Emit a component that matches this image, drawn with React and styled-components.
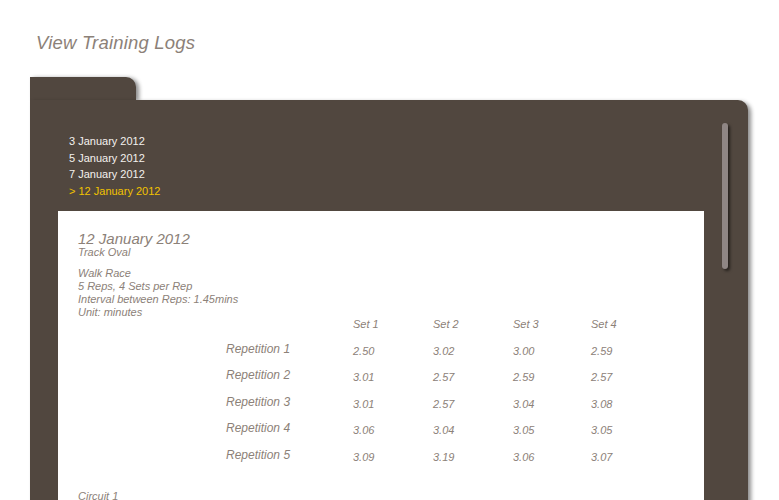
import React from "react";
import styled, { createGlobalStyle } from "styled-components";

const GlobalStyle = createGlobalStyle`
  html, body {
    margin: 0;
    padding: 0;
    background: #ffffff;
    overflow: hidden;
  }
  body {
    font-family: "Liberation Sans", Arial, sans-serif;
  }
  *, *::before, *::after {
    box-sizing: border-box;
  }
`;

const dark = "#51473f";
const ink = "#8c8178";

const Page = styled.div`
  width: 779px;
  height: 500px;
  overflow: hidden;
`;

const Title = styled.h1`
  margin: 0;
  padding: 32px 0 0 36px;
  height: 77px;
  font-size: 18.5px;
  line-height: 22px;
  font-weight: normal;
  font-style: italic;
  color: ${ink};
  letter-spacing: 0.2px;
`;

const Folder = styled.div`
  margin-left: 30px;
  width: 718px;
  display: flex;
  flex-direction: column;
`;

const Tab = styled.div`
  width: 106px;
  height: 23px;
  background: ${dark};
  border-radius: 0 10px 0 0;
  box-shadow: 3px 1px 4px rgba(0, 0, 0, 0.45);
`;

const Panel = styled.div`
  position: relative;
  height: 420px;
  background: ${dark};
  border-radius: 0 10px 0 0;
  box-shadow: 3px 2px 4px rgba(0, 0, 0, 0.45);
  padding: 33px 44px 0 28px;
`;

const Dates = styled.ul`
  list-style: none;
  margin: 0 0 12px 11px;
  padding: 0;
`;

const DateItem = styled.li`
  font-size: 11px;
  line-height: 16.5px;
  color: ${(p) => (p.$active ? "#f2c200" : "#f4f1ee")};
`;

const Scroll = styled.div`
  position: absolute;
  top: 23px;
  right: 20px;
  width: 6px;
  height: 146px;
  border-radius: 3px;
  background: #8f8684;
  box-shadow: 2px 2px 3px rgba(0, 0, 0, 0.55);
`;

const Sheet = styled.div`
  background: #ffffff;
  height: 300px;
  padding: 21px 0 0 20px;
  color: ${ink};
  font-style: italic;
`;

const LogTitle = styled.div`
  font-size: 15px;
  line-height: 14px;
`;

const Line = styled.div`
  font-size: 11px;
  line-height: 13px;
`;

const Block = styled.div`
  margin-top: ${(p) => p.$gap || 0}px;
`;

const Table = styled.div`
  display: grid;
  grid-template-columns: 127px 80px 80px 78px 60px;
  margin: -2px 0 0 148px;
`;

const Cell = styled.div`
  font-size: ${(p) => (p.$label ? 12 : 11)}px;
  height: ${(p) => (p.$head ? 24.5 : 26.5)}px;
  line-height: 14px;
  padding-top: ${(p) => (p.$label || p.$head ? 0 : 2)}px;
`;

const sets = ["Set 1", "Set 2", "Set 3", "Set 4"];
const reps = [
  ["2.50", "3.02", "3.00", "2.59"],
  ["3.01", "2.57", "2.59", "2.57"],
  ["3.01", "2.57", "3.04", "3.08"],
  ["3.06", "3.04", "3.05", "3.05"],
  ["3.09", "3.19", "3.06", "3.07"],
];

export default function App() {
  return (
    <Page>
      <GlobalStyle />
      <Title>View Training Logs</Title>
      <Folder>
        <Tab />
        <Panel>
          <Scroll />
          <Dates>
            <DateItem>3 January 2012</DateItem>
            <DateItem>5 January 2012</DateItem>
            <DateItem>7 January 2012</DateItem>
            <DateItem $active>&gt; 12 January 2012</DateItem>
          </Dates>
          <Sheet>
            <LogTitle>12 January 2012</LogTitle>
            <Line>Track Oval</Line>
            <Block $gap={8}>
              <Line>Walk Race</Line>
              <Line>5 Reps, 4 Sets per Rep</Line>
              <Line>Interval between Reps: 1.45mins</Line>
              <Line>Unit: minutes</Line>
            </Block>
            <Table>
              <Cell $head />
              {sets.map((s) => (
                <Cell $head key={s}>{s}</Cell>
              ))}
              {reps.map((row, i) => (
                <React.Fragment key={i}>
                  <Cell $label>Repetition {i + 1}</Cell>
                  {row.map((v, j) => (
                    <Cell key={j}>{v}</Cell>
                  ))}
                </React.Fragment>
              ))}
            </Table>
            <Block $gap={16}>
              <Line>Circuit 1</Line>
            </Block>
          </Sheet>
        </Panel>
      </Folder>
    </Page>
  );
}
